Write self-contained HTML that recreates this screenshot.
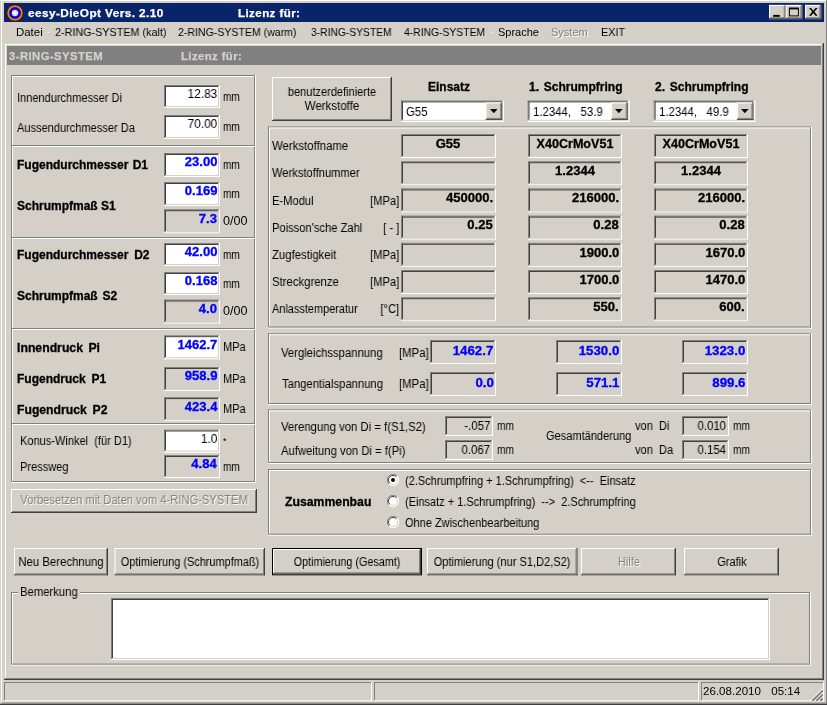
<!DOCTYPE html>
<html><head><meta charset="utf-8"><title>eesy-DieOpt Vers. 2.10</title>
<style>
html,body{margin:0;padding:0;background:#d4d0c8;}
#w{position:relative;width:827px;height:705px;overflow:hidden;background:#d4d0c8;font-family:"Liberation Sans",sans-serif;}
#w div,#w span,#w svg{position:absolute;}
#w .t{white-space:pre;will-change:transform;}
</style></head><body><div id="w">
<svg style="left:0;top:0" width="827" height="705" viewBox="0 0 827 705">
<rect x="0" y="0" width="827" height="705" fill="#d4d0c8"/>
<rect x="0" y="0" width="1" height="705" fill="#d4d0c8"/>
<rect x="1" y="0" width="1" height="705" fill="#ffffff"/>
<rect x="0" y="0" width="826" height="1" fill="#ffffff"/>
<rect x="826" y="0" width="1" height="705" fill="#808080"/>
<rect x="0" y="703.8" width="827" height="1.2" fill="#404040"/>
<rect x="1" y="702.6" width="826" height="1.2" fill="#808080"/>
<rect x="4" y="3" width="820" height="19" fill="#0a246a"/>
<rect x="769" y="4.9" width="16.7" height="14.3" fill="#d4d0c8"/>
<rect x="769" y="4.9" width="15.7" height="1" fill="#ffffff"/>
<rect x="769" y="4.9" width="1" height="13.3" fill="#ffffff"/>
<rect x="769" y="18.2" width="16.7" height="1" fill="#404040"/>
<rect x="784.7" y="4.9" width="1" height="14.3" fill="#404040"/>
<rect x="770" y="17.2" width="14.7" height="1" fill="#808080"/>
<rect x="783.7" y="5.9" width="1" height="12.3" fill="#808080"/>
<rect x="773.2" y="14.9" width="6.6" height="1.9" fill="#000"/>
<rect x="785.7" y="4.9" width="16.7" height="14.3" fill="#d4d0c8"/>
<rect x="785.7" y="4.9" width="15.7" height="1" fill="#ffffff"/>
<rect x="785.7" y="4.9" width="1" height="13.3" fill="#ffffff"/>
<rect x="785.7" y="18.2" width="16.7" height="1" fill="#404040"/>
<rect x="801.4" y="4.9" width="1" height="14.3" fill="#404040"/>
<rect x="786.7" y="17.2" width="14.7" height="1" fill="#808080"/>
<rect x="800.4" y="5.9" width="1" height="12.3" fill="#808080"/>
<rect x="788.9" y="7.5" width="10" height="8.9" fill="#000"/>
<rect x="789.9" y="9.4" width="8" height="6" fill="#d4d0c8"/>
<rect x="805.1" y="4.9" width="16.2" height="14.3" fill="#d4d0c8"/>
<rect x="805.1" y="4.9" width="15.2" height="1" fill="#ffffff"/>
<rect x="805.1" y="4.9" width="1" height="13.3" fill="#ffffff"/>
<rect x="805.1" y="18.2" width="16.2" height="1" fill="#404040"/>
<rect x="820.3" y="4.9" width="1" height="14.3" fill="#404040"/>
<rect x="806.1" y="17.2" width="14.2" height="1" fill="#808080"/>
<rect x="819.3" y="5.9" width="1" height="12.3" fill="#808080"/>
<rect x="47.5" y="32" width="2" height="1" fill="#f0eee8"/>
<rect x="491" y="32" width="2" height="1" fill="#f0eee8"/>
<rect x="5" y="44" width="818" height="1" fill="#ffffff"/>
<rect x="5" y="44" width="1" height="635" fill="#ffffff"/>
<rect x="822" y="44" width="1" height="635" fill="#808080"/>
<rect x="823" y="43" width="1" height="637" fill="#404040"/>
<rect x="5" y="678" width="818" height="1" fill="#808080"/>
<rect x="4" y="679" width="820" height="1" fill="#404040"/>
<rect x="7" y="46" width="814" height="19" fill="#808080"/>
<rect x="11" y="75" width="244" height="1" fill="#808080"/>
<rect x="12" y="76" width="242" height="1" fill="#ffffff"/>
<rect x="11" y="75" width="1" height="407" fill="#808080"/>
<rect x="12" y="76" width="1" height="405" fill="#ffffff"/>
<rect x="11" y="482" width="245" height="1" fill="#ffffff"/>
<rect x="12" y="481" width="243" height="1" fill="#808080"/>
<rect x="255" y="75" width="1" height="408" fill="#ffffff"/>
<rect x="254" y="76" width="1" height="406" fill="#808080"/>
<rect x="12" y="145" width="243" height="1" fill="#808080"/>
<rect x="12" y="146" width="243" height="1" fill="#ffffff"/>
<rect x="12" y="237" width="243" height="1" fill="#808080"/>
<rect x="12" y="238" width="243" height="1" fill="#ffffff"/>
<rect x="12" y="328" width="243" height="1" fill="#808080"/>
<rect x="12" y="329" width="243" height="1" fill="#ffffff"/>
<rect x="12" y="423" width="243" height="1" fill="#808080"/>
<rect x="12" y="424" width="243" height="1" fill="#ffffff"/>
<rect x="164" y="85" width="56" height="23" fill="#ffffff"/>
<rect x="164" y="85" width="55" height="1" fill="#808080"/>
<rect x="164" y="85" width="1" height="22" fill="#808080"/>
<rect x="165" y="86" width="53" height="1" fill="#404040"/>
<rect x="165" y="86" width="1" height="20" fill="#404040"/>
<rect x="164" y="107" width="56" height="1" fill="#ffffff"/>
<rect x="219" y="85" width="1" height="23" fill="#ffffff"/>
<rect x="165" y="106" width="54" height="1" fill="#d4d0c8"/>
<rect x="218" y="86" width="1" height="21" fill="#d4d0c8"/>
<rect x="164" y="115" width="56" height="24" fill="#ffffff"/>
<rect x="164" y="115" width="55" height="1" fill="#808080"/>
<rect x="164" y="115" width="1" height="23" fill="#808080"/>
<rect x="165" y="116" width="53" height="1" fill="#404040"/>
<rect x="165" y="116" width="1" height="21" fill="#404040"/>
<rect x="164" y="138" width="56" height="1" fill="#ffffff"/>
<rect x="219" y="115" width="1" height="24" fill="#ffffff"/>
<rect x="165" y="137" width="54" height="1" fill="#d4d0c8"/>
<rect x="218" y="116" width="1" height="22" fill="#d4d0c8"/>
<rect x="164" y="153" width="56" height="24" fill="#ffffff"/>
<rect x="164" y="153" width="55" height="1" fill="#808080"/>
<rect x="164" y="153" width="1" height="23" fill="#808080"/>
<rect x="165" y="154" width="53" height="1" fill="#404040"/>
<rect x="165" y="154" width="1" height="21" fill="#404040"/>
<rect x="164" y="176" width="56" height="1" fill="#ffffff"/>
<rect x="219" y="153" width="1" height="24" fill="#ffffff"/>
<rect x="165" y="175" width="54" height="1" fill="#d4d0c8"/>
<rect x="218" y="154" width="1" height="22" fill="#d4d0c8"/>
<rect x="164" y="182" width="56" height="24" fill="#ffffff"/>
<rect x="164" y="182" width="55" height="1" fill="#808080"/>
<rect x="164" y="182" width="1" height="23" fill="#808080"/>
<rect x="165" y="183" width="53" height="1" fill="#404040"/>
<rect x="165" y="183" width="1" height="21" fill="#404040"/>
<rect x="164" y="205" width="56" height="1" fill="#ffffff"/>
<rect x="219" y="182" width="1" height="24" fill="#ffffff"/>
<rect x="165" y="204" width="54" height="1" fill="#d4d0c8"/>
<rect x="218" y="183" width="1" height="22" fill="#d4d0c8"/>
<rect x="164" y="209.2" width="56" height="24" fill="#d4d0c8"/>
<rect x="164" y="209.2" width="55" height="1" fill="#808080"/>
<rect x="164" y="209.2" width="1" height="23" fill="#808080"/>
<rect x="165" y="210.2" width="53" height="1" fill="#404040"/>
<rect x="165" y="210.2" width="1" height="21" fill="#404040"/>
<rect x="164" y="232.2" width="56" height="1" fill="#ffffff"/>
<rect x="219" y="209.2" width="1" height="24" fill="#ffffff"/>
<rect x="165" y="231.2" width="54" height="1" fill="#d4d0c8"/>
<rect x="218" y="210.2" width="1" height="22" fill="#d4d0c8"/>
<rect x="164" y="243" width="56" height="23" fill="#ffffff"/>
<rect x="164" y="243" width="55" height="1" fill="#808080"/>
<rect x="164" y="243" width="1" height="22" fill="#808080"/>
<rect x="165" y="244" width="53" height="1" fill="#404040"/>
<rect x="165" y="244" width="1" height="20" fill="#404040"/>
<rect x="164" y="265" width="56" height="1" fill="#ffffff"/>
<rect x="219" y="243" width="1" height="23" fill="#ffffff"/>
<rect x="165" y="264" width="54" height="1" fill="#d4d0c8"/>
<rect x="218" y="244" width="1" height="21" fill="#d4d0c8"/>
<rect x="164" y="272" width="56" height="23" fill="#ffffff"/>
<rect x="164" y="272" width="55" height="1" fill="#808080"/>
<rect x="164" y="272" width="1" height="22" fill="#808080"/>
<rect x="165" y="273" width="53" height="1" fill="#404040"/>
<rect x="165" y="273" width="1" height="20" fill="#404040"/>
<rect x="164" y="294" width="56" height="1" fill="#ffffff"/>
<rect x="219" y="272" width="1" height="23" fill="#ffffff"/>
<rect x="165" y="293" width="54" height="1" fill="#d4d0c8"/>
<rect x="218" y="273" width="1" height="21" fill="#d4d0c8"/>
<rect x="164" y="299.5" width="56" height="24" fill="#d4d0c8"/>
<rect x="164" y="299.5" width="55" height="1" fill="#808080"/>
<rect x="164" y="299.5" width="1" height="23" fill="#808080"/>
<rect x="165" y="300.5" width="53" height="1" fill="#404040"/>
<rect x="165" y="300.5" width="1" height="21" fill="#404040"/>
<rect x="164" y="322.5" width="56" height="1" fill="#ffffff"/>
<rect x="219" y="299.5" width="1" height="24" fill="#ffffff"/>
<rect x="165" y="321.5" width="54" height="1" fill="#d4d0c8"/>
<rect x="218" y="300.5" width="1" height="22" fill="#d4d0c8"/>
<rect x="164" y="335.2" width="56" height="24" fill="#ffffff"/>
<rect x="164" y="335.2" width="55" height="1" fill="#808080"/>
<rect x="164" y="335.2" width="1" height="23" fill="#808080"/>
<rect x="165" y="336.2" width="53" height="1" fill="#404040"/>
<rect x="165" y="336.2" width="1" height="21" fill="#404040"/>
<rect x="164" y="358.2" width="56" height="1" fill="#ffffff"/>
<rect x="219" y="335.2" width="1" height="24" fill="#ffffff"/>
<rect x="165" y="357.2" width="54" height="1" fill="#d4d0c8"/>
<rect x="218" y="336.2" width="1" height="22" fill="#d4d0c8"/>
<rect x="164" y="367" width="56" height="24" fill="#d4d0c8"/>
<rect x="164" y="367" width="55" height="1" fill="#808080"/>
<rect x="164" y="367" width="1" height="23" fill="#808080"/>
<rect x="165" y="368" width="53" height="1" fill="#404040"/>
<rect x="165" y="368" width="1" height="21" fill="#404040"/>
<rect x="164" y="390" width="56" height="1" fill="#ffffff"/>
<rect x="219" y="367" width="1" height="24" fill="#ffffff"/>
<rect x="165" y="389" width="54" height="1" fill="#d4d0c8"/>
<rect x="218" y="368" width="1" height="22" fill="#d4d0c8"/>
<rect x="164" y="397.1" width="56" height="24" fill="#d4d0c8"/>
<rect x="164" y="397.1" width="55" height="1" fill="#808080"/>
<rect x="164" y="397.1" width="1" height="23" fill="#808080"/>
<rect x="165" y="398.1" width="53" height="1" fill="#404040"/>
<rect x="165" y="398.1" width="1" height="21" fill="#404040"/>
<rect x="164" y="420.1" width="56" height="1" fill="#ffffff"/>
<rect x="219" y="397.1" width="1" height="24" fill="#ffffff"/>
<rect x="165" y="419.1" width="54" height="1" fill="#d4d0c8"/>
<rect x="218" y="398.1" width="1" height="22" fill="#d4d0c8"/>
<rect x="164" y="429.5" width="56" height="23" fill="#ffffff"/>
<rect x="164" y="429.5" width="55" height="1" fill="#808080"/>
<rect x="164" y="429.5" width="1" height="22" fill="#808080"/>
<rect x="165" y="430.5" width="53" height="1" fill="#404040"/>
<rect x="165" y="430.5" width="1" height="20" fill="#404040"/>
<rect x="164" y="451.5" width="56" height="1" fill="#ffffff"/>
<rect x="219" y="429.5" width="1" height="23" fill="#ffffff"/>
<rect x="165" y="450.5" width="54" height="1" fill="#d4d0c8"/>
<rect x="218" y="430.5" width="1" height="21" fill="#d4d0c8"/>
<rect x="164" y="455" width="56" height="23" fill="#d4d0c8"/>
<rect x="164" y="455" width="55" height="1" fill="#808080"/>
<rect x="164" y="455" width="1" height="22" fill="#808080"/>
<rect x="165" y="456" width="53" height="1" fill="#404040"/>
<rect x="165" y="456" width="1" height="20" fill="#404040"/>
<rect x="164" y="477" width="56" height="1" fill="#ffffff"/>
<rect x="219" y="455" width="1" height="23" fill="#ffffff"/>
<rect x="165" y="476" width="54" height="1" fill="#d4d0c8"/>
<rect x="218" y="456" width="1" height="21" fill="#d4d0c8"/>
<rect x="11" y="489" width="246" height="24" fill="#d4d0c8"/>
<rect x="11" y="489" width="245" height="1" fill="#ffffff"/>
<rect x="11" y="489" width="1" height="23" fill="#ffffff"/>
<rect x="11" y="512" width="246" height="1" fill="#404040"/>
<rect x="256" y="489" width="1" height="24" fill="#404040"/>
<rect x="12" y="511" width="244" height="1" fill="#808080"/>
<rect x="255" y="490" width="1" height="22" fill="#808080"/>
<rect x="272" y="77" width="120" height="44" fill="#d4d0c8"/>
<rect x="272" y="77" width="119" height="1" fill="#ffffff"/>
<rect x="272" y="77" width="1" height="43" fill="#ffffff"/>
<rect x="272" y="120" width="120" height="1" fill="#404040"/>
<rect x="391" y="77" width="1" height="44" fill="#404040"/>
<rect x="273" y="119" width="118" height="1" fill="#808080"/>
<rect x="390" y="78" width="1" height="42" fill="#808080"/>
<rect x="401" y="100.4" width="103" height="21.4" fill="#ffffff"/>
<rect x="401" y="100.4" width="102" height="1" fill="#808080"/>
<rect x="401" y="100.4" width="1" height="20.4" fill="#808080"/>
<rect x="402" y="101.4" width="100" height="1" fill="#404040"/>
<rect x="402" y="101.4" width="1" height="18.4" fill="#404040"/>
<rect x="401" y="120.8" width="103" height="1" fill="#ffffff"/>
<rect x="503" y="100.4" width="1" height="21.4" fill="#ffffff"/>
<rect x="402" y="119.8" width="101" height="1" fill="#d4d0c8"/>
<rect x="502" y="101.4" width="1" height="19.4" fill="#d4d0c8"/>
<rect x="485.7" y="102.5" width="16.5" height="17.4" fill="#d4d0c8"/>
<rect x="485.7" y="102.5" width="15.5" height="1" fill="#ffffff"/>
<rect x="485.7" y="102.5" width="1" height="16.4" fill="#ffffff"/>
<rect x="485.7" y="118.9" width="16.5" height="1" fill="#404040"/>
<rect x="501.2" y="102.5" width="1" height="17.4" fill="#404040"/>
<rect x="486.7" y="117.9" width="14.5" height="1" fill="#808080"/>
<rect x="500.2" y="103.5" width="1" height="15.4" fill="#808080"/>
<rect x="527.5" y="100.4" width="102" height="21.4" fill="#ffffff"/>
<rect x="527.5" y="100.4" width="101" height="1" fill="#808080"/>
<rect x="527.5" y="100.4" width="1" height="20.4" fill="#808080"/>
<rect x="528.5" y="101.4" width="99" height="1" fill="#404040"/>
<rect x="528.5" y="101.4" width="1" height="18.4" fill="#404040"/>
<rect x="527.5" y="120.8" width="102" height="1" fill="#ffffff"/>
<rect x="628.5" y="100.4" width="1" height="21.4" fill="#ffffff"/>
<rect x="528.5" y="119.8" width="100" height="1" fill="#d4d0c8"/>
<rect x="627.5" y="101.4" width="1" height="19.4" fill="#d4d0c8"/>
<rect x="611.2" y="102.5" width="16.5" height="17.4" fill="#d4d0c8"/>
<rect x="611.2" y="102.5" width="15.5" height="1" fill="#ffffff"/>
<rect x="611.2" y="102.5" width="1" height="16.4" fill="#ffffff"/>
<rect x="611.2" y="118.9" width="16.5" height="1" fill="#404040"/>
<rect x="626.7" y="102.5" width="1" height="17.4" fill="#404040"/>
<rect x="612.2" y="117.9" width="14.5" height="1" fill="#808080"/>
<rect x="625.7" y="103.5" width="1" height="15.4" fill="#808080"/>
<rect x="653.6" y="100.4" width="101.6" height="21.4" fill="#ffffff"/>
<rect x="653.6" y="100.4" width="100.6" height="1" fill="#808080"/>
<rect x="653.6" y="100.4" width="1" height="20.4" fill="#808080"/>
<rect x="654.6" y="101.4" width="98.6" height="1" fill="#404040"/>
<rect x="654.6" y="101.4" width="1" height="18.4" fill="#404040"/>
<rect x="653.6" y="120.8" width="101.6" height="1" fill="#ffffff"/>
<rect x="754.2" y="100.4" width="1" height="21.4" fill="#ffffff"/>
<rect x="654.6" y="119.8" width="99.6" height="1" fill="#d4d0c8"/>
<rect x="753.2" y="101.4" width="1" height="19.4" fill="#d4d0c8"/>
<rect x="736.9" y="102.5" width="16.5" height="17.4" fill="#d4d0c8"/>
<rect x="736.9" y="102.5" width="15.5" height="1" fill="#ffffff"/>
<rect x="736.9" y="102.5" width="1" height="16.4" fill="#ffffff"/>
<rect x="736.9" y="118.9" width="16.5" height="1" fill="#404040"/>
<rect x="752.4" y="102.5" width="1" height="17.4" fill="#404040"/>
<rect x="737.9" y="117.9" width="14.5" height="1" fill="#808080"/>
<rect x="751.4" y="103.5" width="1" height="15.4" fill="#808080"/>
<rect x="268" y="126.5" width="543" height="1" fill="#808080"/>
<rect x="269" y="127.5" width="541" height="1" fill="#ffffff"/>
<rect x="268" y="126.5" width="1" height="201" fill="#808080"/>
<rect x="269" y="127.5" width="1" height="199" fill="#ffffff"/>
<rect x="268" y="327.5" width="544" height="1" fill="#ffffff"/>
<rect x="269" y="326.5" width="542" height="1" fill="#808080"/>
<rect x="811" y="126.5" width="1" height="202" fill="#ffffff"/>
<rect x="810" y="127.5" width="1" height="200" fill="#808080"/>
<rect x="401" y="134" width="95" height="24" fill="#d4d0c8"/>
<rect x="401" y="134" width="94" height="1" fill="#808080"/>
<rect x="401" y="134" width="1" height="23" fill="#808080"/>
<rect x="402" y="135" width="92" height="1" fill="#404040"/>
<rect x="402" y="135" width="1" height="21" fill="#404040"/>
<rect x="401" y="157" width="95" height="1" fill="#ffffff"/>
<rect x="495" y="134" width="1" height="24" fill="#ffffff"/>
<rect x="402" y="156" width="93" height="1" fill="#d4d0c8"/>
<rect x="494" y="135" width="1" height="22" fill="#d4d0c8"/>
<rect x="528" y="134" width="94" height="24" fill="#d4d0c8"/>
<rect x="528" y="134" width="93" height="1" fill="#808080"/>
<rect x="528" y="134" width="1" height="23" fill="#808080"/>
<rect x="529" y="135" width="91" height="1" fill="#404040"/>
<rect x="529" y="135" width="1" height="21" fill="#404040"/>
<rect x="528" y="157" width="94" height="1" fill="#ffffff"/>
<rect x="621" y="134" width="1" height="24" fill="#ffffff"/>
<rect x="529" y="156" width="92" height="1" fill="#d4d0c8"/>
<rect x="620" y="135" width="1" height="22" fill="#d4d0c8"/>
<rect x="654" y="134" width="94" height="24" fill="#d4d0c8"/>
<rect x="654" y="134" width="93" height="1" fill="#808080"/>
<rect x="654" y="134" width="1" height="23" fill="#808080"/>
<rect x="655" y="135" width="91" height="1" fill="#404040"/>
<rect x="655" y="135" width="1" height="21" fill="#404040"/>
<rect x="654" y="157" width="94" height="1" fill="#ffffff"/>
<rect x="747" y="134" width="1" height="24" fill="#ffffff"/>
<rect x="655" y="156" width="92" height="1" fill="#d4d0c8"/>
<rect x="746" y="135" width="1" height="22" fill="#d4d0c8"/>
<rect x="401" y="161.2" width="95" height="24" fill="#d4d0c8"/>
<rect x="401" y="161.2" width="94" height="1" fill="#808080"/>
<rect x="401" y="161.2" width="1" height="23" fill="#808080"/>
<rect x="402" y="162.2" width="92" height="1" fill="#404040"/>
<rect x="402" y="162.2" width="1" height="21" fill="#404040"/>
<rect x="401" y="184.2" width="95" height="1" fill="#ffffff"/>
<rect x="495" y="161.2" width="1" height="24" fill="#ffffff"/>
<rect x="402" y="183.2" width="93" height="1" fill="#d4d0c8"/>
<rect x="494" y="162.2" width="1" height="22" fill="#d4d0c8"/>
<rect x="528" y="161.2" width="94" height="24" fill="#d4d0c8"/>
<rect x="528" y="161.2" width="93" height="1" fill="#808080"/>
<rect x="528" y="161.2" width="1" height="23" fill="#808080"/>
<rect x="529" y="162.2" width="91" height="1" fill="#404040"/>
<rect x="529" y="162.2" width="1" height="21" fill="#404040"/>
<rect x="528" y="184.2" width="94" height="1" fill="#ffffff"/>
<rect x="621" y="161.2" width="1" height="24" fill="#ffffff"/>
<rect x="529" y="183.2" width="92" height="1" fill="#d4d0c8"/>
<rect x="620" y="162.2" width="1" height="22" fill="#d4d0c8"/>
<rect x="654" y="161.2" width="94" height="24" fill="#d4d0c8"/>
<rect x="654" y="161.2" width="93" height="1" fill="#808080"/>
<rect x="654" y="161.2" width="1" height="23" fill="#808080"/>
<rect x="655" y="162.2" width="91" height="1" fill="#404040"/>
<rect x="655" y="162.2" width="1" height="21" fill="#404040"/>
<rect x="654" y="184.2" width="94" height="1" fill="#ffffff"/>
<rect x="747" y="161.2" width="1" height="24" fill="#ffffff"/>
<rect x="655" y="183.2" width="92" height="1" fill="#d4d0c8"/>
<rect x="746" y="162.2" width="1" height="22" fill="#d4d0c8"/>
<rect x="401" y="188.4" width="95" height="24" fill="#d4d0c8"/>
<rect x="401" y="188.4" width="94" height="1" fill="#808080"/>
<rect x="401" y="188.4" width="1" height="23" fill="#808080"/>
<rect x="402" y="189.4" width="92" height="1" fill="#404040"/>
<rect x="402" y="189.4" width="1" height="21" fill="#404040"/>
<rect x="401" y="211.4" width="95" height="1" fill="#ffffff"/>
<rect x="495" y="188.4" width="1" height="24" fill="#ffffff"/>
<rect x="402" y="210.4" width="93" height="1" fill="#d4d0c8"/>
<rect x="494" y="189.4" width="1" height="22" fill="#d4d0c8"/>
<rect x="528" y="188.4" width="94" height="24" fill="#d4d0c8"/>
<rect x="528" y="188.4" width="93" height="1" fill="#808080"/>
<rect x="528" y="188.4" width="1" height="23" fill="#808080"/>
<rect x="529" y="189.4" width="91" height="1" fill="#404040"/>
<rect x="529" y="189.4" width="1" height="21" fill="#404040"/>
<rect x="528" y="211.4" width="94" height="1" fill="#ffffff"/>
<rect x="621" y="188.4" width="1" height="24" fill="#ffffff"/>
<rect x="529" y="210.4" width="92" height="1" fill="#d4d0c8"/>
<rect x="620" y="189.4" width="1" height="22" fill="#d4d0c8"/>
<rect x="654" y="188.4" width="94" height="24" fill="#d4d0c8"/>
<rect x="654" y="188.4" width="93" height="1" fill="#808080"/>
<rect x="654" y="188.4" width="1" height="23" fill="#808080"/>
<rect x="655" y="189.4" width="91" height="1" fill="#404040"/>
<rect x="655" y="189.4" width="1" height="21" fill="#404040"/>
<rect x="654" y="211.4" width="94" height="1" fill="#ffffff"/>
<rect x="747" y="188.4" width="1" height="24" fill="#ffffff"/>
<rect x="655" y="210.4" width="92" height="1" fill="#d4d0c8"/>
<rect x="746" y="189.4" width="1" height="22" fill="#d4d0c8"/>
<rect x="401" y="215.6" width="95" height="24" fill="#d4d0c8"/>
<rect x="401" y="215.6" width="94" height="1" fill="#808080"/>
<rect x="401" y="215.6" width="1" height="23" fill="#808080"/>
<rect x="402" y="216.6" width="92" height="1" fill="#404040"/>
<rect x="402" y="216.6" width="1" height="21" fill="#404040"/>
<rect x="401" y="238.6" width="95" height="1" fill="#ffffff"/>
<rect x="495" y="215.6" width="1" height="24" fill="#ffffff"/>
<rect x="402" y="237.6" width="93" height="1" fill="#d4d0c8"/>
<rect x="494" y="216.6" width="1" height="22" fill="#d4d0c8"/>
<rect x="528" y="215.6" width="94" height="24" fill="#d4d0c8"/>
<rect x="528" y="215.6" width="93" height="1" fill="#808080"/>
<rect x="528" y="215.6" width="1" height="23" fill="#808080"/>
<rect x="529" y="216.6" width="91" height="1" fill="#404040"/>
<rect x="529" y="216.6" width="1" height="21" fill="#404040"/>
<rect x="528" y="238.6" width="94" height="1" fill="#ffffff"/>
<rect x="621" y="215.6" width="1" height="24" fill="#ffffff"/>
<rect x="529" y="237.6" width="92" height="1" fill="#d4d0c8"/>
<rect x="620" y="216.6" width="1" height="22" fill="#d4d0c8"/>
<rect x="654" y="215.6" width="94" height="24" fill="#d4d0c8"/>
<rect x="654" y="215.6" width="93" height="1" fill="#808080"/>
<rect x="654" y="215.6" width="1" height="23" fill="#808080"/>
<rect x="655" y="216.6" width="91" height="1" fill="#404040"/>
<rect x="655" y="216.6" width="1" height="21" fill="#404040"/>
<rect x="654" y="238.6" width="94" height="1" fill="#ffffff"/>
<rect x="747" y="215.6" width="1" height="24" fill="#ffffff"/>
<rect x="655" y="237.6" width="92" height="1" fill="#d4d0c8"/>
<rect x="746" y="216.6" width="1" height="22" fill="#d4d0c8"/>
<rect x="401" y="242.8" width="95" height="24" fill="#d4d0c8"/>
<rect x="401" y="242.8" width="94" height="1" fill="#808080"/>
<rect x="401" y="242.8" width="1" height="23" fill="#808080"/>
<rect x="402" y="243.8" width="92" height="1" fill="#404040"/>
<rect x="402" y="243.8" width="1" height="21" fill="#404040"/>
<rect x="401" y="265.8" width="95" height="1" fill="#ffffff"/>
<rect x="495" y="242.8" width="1" height="24" fill="#ffffff"/>
<rect x="402" y="264.8" width="93" height="1" fill="#d4d0c8"/>
<rect x="494" y="243.8" width="1" height="22" fill="#d4d0c8"/>
<rect x="528" y="242.8" width="94" height="24" fill="#d4d0c8"/>
<rect x="528" y="242.8" width="93" height="1" fill="#808080"/>
<rect x="528" y="242.8" width="1" height="23" fill="#808080"/>
<rect x="529" y="243.8" width="91" height="1" fill="#404040"/>
<rect x="529" y="243.8" width="1" height="21" fill="#404040"/>
<rect x="528" y="265.8" width="94" height="1" fill="#ffffff"/>
<rect x="621" y="242.8" width="1" height="24" fill="#ffffff"/>
<rect x="529" y="264.8" width="92" height="1" fill="#d4d0c8"/>
<rect x="620" y="243.8" width="1" height="22" fill="#d4d0c8"/>
<rect x="654" y="242.8" width="94" height="24" fill="#d4d0c8"/>
<rect x="654" y="242.8" width="93" height="1" fill="#808080"/>
<rect x="654" y="242.8" width="1" height="23" fill="#808080"/>
<rect x="655" y="243.8" width="91" height="1" fill="#404040"/>
<rect x="655" y="243.8" width="1" height="21" fill="#404040"/>
<rect x="654" y="265.8" width="94" height="1" fill="#ffffff"/>
<rect x="747" y="242.8" width="1" height="24" fill="#ffffff"/>
<rect x="655" y="264.8" width="92" height="1" fill="#d4d0c8"/>
<rect x="746" y="243.8" width="1" height="22" fill="#d4d0c8"/>
<rect x="401" y="270" width="95" height="24" fill="#d4d0c8"/>
<rect x="401" y="270" width="94" height="1" fill="#808080"/>
<rect x="401" y="270" width="1" height="23" fill="#808080"/>
<rect x="402" y="271" width="92" height="1" fill="#404040"/>
<rect x="402" y="271" width="1" height="21" fill="#404040"/>
<rect x="401" y="293" width="95" height="1" fill="#ffffff"/>
<rect x="495" y="270" width="1" height="24" fill="#ffffff"/>
<rect x="402" y="292" width="93" height="1" fill="#d4d0c8"/>
<rect x="494" y="271" width="1" height="22" fill="#d4d0c8"/>
<rect x="528" y="270" width="94" height="24" fill="#d4d0c8"/>
<rect x="528" y="270" width="93" height="1" fill="#808080"/>
<rect x="528" y="270" width="1" height="23" fill="#808080"/>
<rect x="529" y="271" width="91" height="1" fill="#404040"/>
<rect x="529" y="271" width="1" height="21" fill="#404040"/>
<rect x="528" y="293" width="94" height="1" fill="#ffffff"/>
<rect x="621" y="270" width="1" height="24" fill="#ffffff"/>
<rect x="529" y="292" width="92" height="1" fill="#d4d0c8"/>
<rect x="620" y="271" width="1" height="22" fill="#d4d0c8"/>
<rect x="654" y="270" width="94" height="24" fill="#d4d0c8"/>
<rect x="654" y="270" width="93" height="1" fill="#808080"/>
<rect x="654" y="270" width="1" height="23" fill="#808080"/>
<rect x="655" y="271" width="91" height="1" fill="#404040"/>
<rect x="655" y="271" width="1" height="21" fill="#404040"/>
<rect x="654" y="293" width="94" height="1" fill="#ffffff"/>
<rect x="747" y="270" width="1" height="24" fill="#ffffff"/>
<rect x="655" y="292" width="92" height="1" fill="#d4d0c8"/>
<rect x="746" y="271" width="1" height="22" fill="#d4d0c8"/>
<rect x="401" y="297.2" width="95" height="24" fill="#d4d0c8"/>
<rect x="401" y="297.2" width="94" height="1" fill="#808080"/>
<rect x="401" y="297.2" width="1" height="23" fill="#808080"/>
<rect x="402" y="298.2" width="92" height="1" fill="#404040"/>
<rect x="402" y="298.2" width="1" height="21" fill="#404040"/>
<rect x="401" y="320.2" width="95" height="1" fill="#ffffff"/>
<rect x="495" y="297.2" width="1" height="24" fill="#ffffff"/>
<rect x="402" y="319.2" width="93" height="1" fill="#d4d0c8"/>
<rect x="494" y="298.2" width="1" height="22" fill="#d4d0c8"/>
<rect x="528" y="297.2" width="94" height="24" fill="#d4d0c8"/>
<rect x="528" y="297.2" width="93" height="1" fill="#808080"/>
<rect x="528" y="297.2" width="1" height="23" fill="#808080"/>
<rect x="529" y="298.2" width="91" height="1" fill="#404040"/>
<rect x="529" y="298.2" width="1" height="21" fill="#404040"/>
<rect x="528" y="320.2" width="94" height="1" fill="#ffffff"/>
<rect x="621" y="297.2" width="1" height="24" fill="#ffffff"/>
<rect x="529" y="319.2" width="92" height="1" fill="#d4d0c8"/>
<rect x="620" y="298.2" width="1" height="22" fill="#d4d0c8"/>
<rect x="654" y="297.2" width="94" height="24" fill="#d4d0c8"/>
<rect x="654" y="297.2" width="93" height="1" fill="#808080"/>
<rect x="654" y="297.2" width="1" height="23" fill="#808080"/>
<rect x="655" y="298.2" width="91" height="1" fill="#404040"/>
<rect x="655" y="298.2" width="1" height="21" fill="#404040"/>
<rect x="654" y="320.2" width="94" height="1" fill="#ffffff"/>
<rect x="747" y="297.2" width="1" height="24" fill="#ffffff"/>
<rect x="655" y="319.2" width="92" height="1" fill="#d4d0c8"/>
<rect x="746" y="298.2" width="1" height="22" fill="#d4d0c8"/>
<rect x="268" y="333.3" width="543" height="1" fill="#808080"/>
<rect x="269" y="334.3" width="541" height="1" fill="#ffffff"/>
<rect x="268" y="333.3" width="1" height="70.7" fill="#808080"/>
<rect x="269" y="334.3" width="1" height="68.7" fill="#ffffff"/>
<rect x="268" y="404" width="544" height="1" fill="#ffffff"/>
<rect x="269" y="403" width="542" height="1" fill="#808080"/>
<rect x="811" y="333.3" width="1" height="71.7" fill="#ffffff"/>
<rect x="810" y="334.3" width="1" height="69.7" fill="#808080"/>
<rect x="430" y="340" width="66" height="24" fill="#d4d0c8"/>
<rect x="430" y="340" width="65" height="1" fill="#808080"/>
<rect x="430" y="340" width="1" height="23" fill="#808080"/>
<rect x="431" y="341" width="63" height="1" fill="#404040"/>
<rect x="431" y="341" width="1" height="21" fill="#404040"/>
<rect x="430" y="363" width="66" height="1" fill="#ffffff"/>
<rect x="495" y="340" width="1" height="24" fill="#ffffff"/>
<rect x="431" y="362" width="64" height="1" fill="#d4d0c8"/>
<rect x="494" y="341" width="1" height="22" fill="#d4d0c8"/>
<rect x="556" y="340" width="66" height="24" fill="#d4d0c8"/>
<rect x="556" y="340" width="65" height="1" fill="#808080"/>
<rect x="556" y="340" width="1" height="23" fill="#808080"/>
<rect x="557" y="341" width="63" height="1" fill="#404040"/>
<rect x="557" y="341" width="1" height="21" fill="#404040"/>
<rect x="556" y="363" width="66" height="1" fill="#ffffff"/>
<rect x="621" y="340" width="1" height="24" fill="#ffffff"/>
<rect x="557" y="362" width="64" height="1" fill="#d4d0c8"/>
<rect x="620" y="341" width="1" height="22" fill="#d4d0c8"/>
<rect x="682" y="340" width="66" height="24" fill="#d4d0c8"/>
<rect x="682" y="340" width="65" height="1" fill="#808080"/>
<rect x="682" y="340" width="1" height="23" fill="#808080"/>
<rect x="683" y="341" width="63" height="1" fill="#404040"/>
<rect x="683" y="341" width="1" height="21" fill="#404040"/>
<rect x="682" y="363" width="66" height="1" fill="#ffffff"/>
<rect x="747" y="340" width="1" height="24" fill="#ffffff"/>
<rect x="683" y="362" width="64" height="1" fill="#d4d0c8"/>
<rect x="746" y="341" width="1" height="22" fill="#d4d0c8"/>
<rect x="430" y="372" width="66" height="24" fill="#d4d0c8"/>
<rect x="430" y="372" width="65" height="1" fill="#808080"/>
<rect x="430" y="372" width="1" height="23" fill="#808080"/>
<rect x="431" y="373" width="63" height="1" fill="#404040"/>
<rect x="431" y="373" width="1" height="21" fill="#404040"/>
<rect x="430" y="395" width="66" height="1" fill="#ffffff"/>
<rect x="495" y="372" width="1" height="24" fill="#ffffff"/>
<rect x="431" y="394" width="64" height="1" fill="#d4d0c8"/>
<rect x="494" y="373" width="1" height="22" fill="#d4d0c8"/>
<rect x="556" y="372" width="66" height="24" fill="#d4d0c8"/>
<rect x="556" y="372" width="65" height="1" fill="#808080"/>
<rect x="556" y="372" width="1" height="23" fill="#808080"/>
<rect x="557" y="373" width="63" height="1" fill="#404040"/>
<rect x="557" y="373" width="1" height="21" fill="#404040"/>
<rect x="556" y="395" width="66" height="1" fill="#ffffff"/>
<rect x="621" y="372" width="1" height="24" fill="#ffffff"/>
<rect x="557" y="394" width="64" height="1" fill="#d4d0c8"/>
<rect x="620" y="373" width="1" height="22" fill="#d4d0c8"/>
<rect x="682" y="372" width="66" height="24" fill="#d4d0c8"/>
<rect x="682" y="372" width="65" height="1" fill="#808080"/>
<rect x="682" y="372" width="1" height="23" fill="#808080"/>
<rect x="683" y="373" width="63" height="1" fill="#404040"/>
<rect x="683" y="373" width="1" height="21" fill="#404040"/>
<rect x="682" y="395" width="66" height="1" fill="#ffffff"/>
<rect x="747" y="372" width="1" height="24" fill="#ffffff"/>
<rect x="683" y="394" width="64" height="1" fill="#d4d0c8"/>
<rect x="746" y="373" width="1" height="22" fill="#d4d0c8"/>
<rect x="268" y="409.4" width="543" height="1" fill="#808080"/>
<rect x="269" y="410.4" width="541" height="1" fill="#ffffff"/>
<rect x="268" y="409.4" width="1" height="53.6" fill="#808080"/>
<rect x="269" y="410.4" width="1" height="51.6" fill="#ffffff"/>
<rect x="268" y="463" width="544" height="1" fill="#ffffff"/>
<rect x="269" y="462" width="542" height="1" fill="#808080"/>
<rect x="811" y="409.4" width="1" height="54.6" fill="#ffffff"/>
<rect x="810" y="410.4" width="1" height="52.6" fill="#808080"/>
<rect x="445" y="416" width="48" height="20" fill="#d4d0c8"/>
<rect x="445" y="416" width="47" height="1" fill="#808080"/>
<rect x="445" y="416" width="1" height="19" fill="#808080"/>
<rect x="446" y="417" width="45" height="1" fill="#404040"/>
<rect x="446" y="417" width="1" height="17" fill="#404040"/>
<rect x="445" y="435" width="48" height="1" fill="#ffffff"/>
<rect x="492" y="416" width="1" height="20" fill="#ffffff"/>
<rect x="446" y="434" width="46" height="1" fill="#d4d0c8"/>
<rect x="491" y="417" width="1" height="18" fill="#d4d0c8"/>
<rect x="682" y="416" width="47" height="20" fill="#d4d0c8"/>
<rect x="682" y="416" width="46" height="1" fill="#808080"/>
<rect x="682" y="416" width="1" height="19" fill="#808080"/>
<rect x="683" y="417" width="44" height="1" fill="#404040"/>
<rect x="683" y="417" width="1" height="17" fill="#404040"/>
<rect x="682" y="435" width="47" height="1" fill="#ffffff"/>
<rect x="728" y="416" width="1" height="20" fill="#ffffff"/>
<rect x="683" y="434" width="45" height="1" fill="#d4d0c8"/>
<rect x="727" y="417" width="1" height="18" fill="#d4d0c8"/>
<rect x="445" y="440" width="48" height="20" fill="#d4d0c8"/>
<rect x="445" y="440" width="47" height="1" fill="#808080"/>
<rect x="445" y="440" width="1" height="19" fill="#808080"/>
<rect x="446" y="441" width="45" height="1" fill="#404040"/>
<rect x="446" y="441" width="1" height="17" fill="#404040"/>
<rect x="445" y="459" width="48" height="1" fill="#ffffff"/>
<rect x="492" y="440" width="1" height="20" fill="#ffffff"/>
<rect x="446" y="458" width="46" height="1" fill="#d4d0c8"/>
<rect x="491" y="441" width="1" height="18" fill="#d4d0c8"/>
<rect x="682" y="440" width="47" height="20" fill="#d4d0c8"/>
<rect x="682" y="440" width="46" height="1" fill="#808080"/>
<rect x="682" y="440" width="1" height="19" fill="#808080"/>
<rect x="683" y="441" width="44" height="1" fill="#404040"/>
<rect x="683" y="441" width="1" height="17" fill="#404040"/>
<rect x="682" y="459" width="47" height="1" fill="#ffffff"/>
<rect x="728" y="440" width="1" height="20" fill="#ffffff"/>
<rect x="683" y="458" width="45" height="1" fill="#d4d0c8"/>
<rect x="727" y="441" width="1" height="18" fill="#d4d0c8"/>
<rect x="268" y="469" width="543" height="1" fill="#808080"/>
<rect x="269" y="470" width="541" height="1" fill="#ffffff"/>
<rect x="268" y="469" width="1" height="65.7" fill="#808080"/>
<rect x="269" y="470" width="1" height="63.7" fill="#ffffff"/>
<rect x="268" y="534.7" width="544" height="1" fill="#ffffff"/>
<rect x="269" y="533.7" width="542" height="1" fill="#808080"/>
<rect x="811" y="469" width="1" height="66.7" fill="#ffffff"/>
<rect x="810" y="470" width="1" height="64.7" fill="#808080"/>
<rect x="14" y="548" width="94" height="27.3" fill="#d4d0c8"/>
<rect x="14" y="548" width="93" height="1" fill="#ffffff"/>
<rect x="14" y="548" width="1" height="26.3" fill="#ffffff"/>
<rect x="14" y="574.3" width="94" height="1" fill="#404040"/>
<rect x="107" y="548" width="1" height="27.3" fill="#404040"/>
<rect x="15" y="573.3" width="92" height="1" fill="#808080"/>
<rect x="106" y="549" width="1" height="25.3" fill="#808080"/>
<rect x="114.5" y="548" width="150.5" height="27.3" fill="#d4d0c8"/>
<rect x="114.5" y="548" width="149.5" height="1" fill="#ffffff"/>
<rect x="114.5" y="548" width="1" height="26.3" fill="#ffffff"/>
<rect x="114.5" y="574.3" width="150.5" height="1" fill="#404040"/>
<rect x="264" y="548" width="1" height="27.3" fill="#404040"/>
<rect x="115.5" y="573.3" width="148.5" height="1" fill="#808080"/>
<rect x="263" y="549" width="1" height="25.3" fill="#808080"/>
<rect x="272" y="548" width="150" height="27.3" fill="#000"/>
<rect x="273" y="549" width="148" height="25.3" fill="#d4d0c8"/>
<rect x="273" y="549" width="147" height="1" fill="#ffffff"/>
<rect x="273" y="549" width="1" height="24.3" fill="#ffffff"/>
<rect x="273" y="573.3" width="148" height="1" fill="#404040"/>
<rect x="420" y="549" width="1" height="25.3" fill="#404040"/>
<rect x="274" y="572.3" width="146" height="1" fill="#808080"/>
<rect x="419" y="550" width="1" height="23.3" fill="#808080"/>
<rect x="427" y="548" width="150.5" height="27.3" fill="#d4d0c8"/>
<rect x="427" y="548" width="149.5" height="1" fill="#ffffff"/>
<rect x="427" y="548" width="1" height="26.3" fill="#ffffff"/>
<rect x="427" y="574.3" width="150.5" height="1" fill="#404040"/>
<rect x="576.5" y="548" width="1" height="27.3" fill="#404040"/>
<rect x="428" y="573.3" width="148.5" height="1" fill="#808080"/>
<rect x="575.5" y="549" width="1" height="25.3" fill="#808080"/>
<rect x="581" y="548" width="95" height="27.3" fill="#d4d0c8"/>
<rect x="581" y="548" width="94" height="1" fill="#ffffff"/>
<rect x="581" y="548" width="1" height="26.3" fill="#ffffff"/>
<rect x="581" y="574.3" width="95" height="1" fill="#404040"/>
<rect x="675" y="548" width="1" height="27.3" fill="#404040"/>
<rect x="582" y="573.3" width="93" height="1" fill="#808080"/>
<rect x="674" y="549" width="1" height="25.3" fill="#808080"/>
<rect x="684" y="548" width="95" height="27.3" fill="#d4d0c8"/>
<rect x="684" y="548" width="94" height="1" fill="#ffffff"/>
<rect x="684" y="548" width="1" height="26.3" fill="#ffffff"/>
<rect x="684" y="574.3" width="95" height="1" fill="#404040"/>
<rect x="778" y="548" width="1" height="27.3" fill="#404040"/>
<rect x="685" y="573.3" width="93" height="1" fill="#808080"/>
<rect x="777" y="549" width="1" height="25.3" fill="#808080"/>
<rect x="11" y="592" width="799" height="1" fill="#808080"/>
<rect x="12" y="593" width="797" height="1" fill="#ffffff"/>
<rect x="11" y="592" width="1" height="72.6" fill="#808080"/>
<rect x="12" y="593" width="1" height="70.6" fill="#ffffff"/>
<rect x="11" y="664.6" width="800" height="1" fill="#ffffff"/>
<rect x="12" y="663.6" width="798" height="1" fill="#808080"/>
<rect x="810" y="592" width="1" height="73.6" fill="#ffffff"/>
<rect x="809" y="593" width="1" height="71.6" fill="#808080"/>
<rect x="18" y="588" width="62" height="10" fill="#d4d0c8"/>
<rect x="111" y="598" width="659" height="62" fill="#ffffff"/>
<rect x="111" y="598" width="658" height="1" fill="#808080"/>
<rect x="111" y="598" width="1" height="61" fill="#808080"/>
<rect x="112" y="599" width="656" height="1" fill="#404040"/>
<rect x="112" y="599" width="1" height="59" fill="#404040"/>
<rect x="111" y="659" width="659" height="1" fill="#ffffff"/>
<rect x="769" y="598" width="1" height="62" fill="#ffffff"/>
<rect x="112" y="658" width="657" height="1" fill="#d4d0c8"/>
<rect x="768" y="599" width="1" height="60" fill="#d4d0c8"/>
<rect x="4" y="682" width="367" height="1" fill="#808080"/>
<rect x="4" y="682" width="1" height="18.3" fill="#808080"/>
<rect x="4" y="700.3" width="368" height="1" fill="#ffffff"/>
<rect x="371" y="682" width="1" height="19.3" fill="#ffffff"/>
<rect x="374" y="682" width="324" height="1" fill="#808080"/>
<rect x="374" y="682" width="1" height="18.3" fill="#808080"/>
<rect x="374" y="700.3" width="325" height="1" fill="#ffffff"/>
<rect x="698" y="682" width="1" height="19.3" fill="#ffffff"/>
<rect x="701" y="682" width="122" height="1" fill="#808080"/>
<rect x="701" y="682" width="1" height="18.3" fill="#808080"/>
<rect x="701" y="700.3" width="123" height="1" fill="#ffffff"/>
<rect x="823" y="682" width="1" height="19.3" fill="#ffffff"/>
</svg>
<svg style="left:5.65px;top:3.5px" width="18" height="18" viewBox="0 0 18 18">
<circle cx="9" cy="9" r="8.1" fill="#ff8000" stroke="#101020" stroke-width="0.7"/>
<circle cx="9" cy="9" r="5.7" fill="#0000ff" stroke="#201060" stroke-width="0.5"/>
<circle cx="9" cy="9" r="3.3" fill="#c8c8d0"/>
<path d="M9 6.3v5.4M6.3 9h5.4" stroke="#ffffff" stroke-width="1.3"/>
</svg>
<span class="t" style="top:7.69px;font-size:11px;line-height:11px;font-weight:bold;color:#ffffff;letter-spacing:0.4px;left:27.5px;transform-origin:0 0;transform:scaleX(1.07);-webkit-text-stroke:0.25px #fff;">eesy-DieOpt Vers. 2.10</span>
<span class="t" style="top:7.69px;font-size:11px;line-height:11px;font-weight:bold;color:#ffffff;letter-spacing:0.4px;left:238px;transform-origin:0 0;transform:scaleX(1.05);-webkit-text-stroke:0.25px #fff;">Lizenz für:</span>
<svg style="left:809.0px;top:8.1px" width="8.6" height="7.7" viewBox="0 0 8 7" preserveAspectRatio="none"><path d="M0 0h2l2 2.5 2-2.5h2l-3 3.5 3 3.5h-2l-2-2.5-2 2.5h-2l3-3.5z" fill="#000"/></svg>
<span class="t" style="top:26.69px;font-size:11px;line-height:11px;font-weight:normal;color:#000;left:16px;transform-origin:0 0;transform:scaleX(1.04);">Datei</span>
<span class="t" style="top:26.69px;font-size:11px;line-height:11px;font-weight:normal;color:#000;left:55px;transform-origin:0 0;transform:scaleX(0.98);">2-RING-SYSTEM (kalt)</span>
<span class="t" style="top:26.69px;font-size:11px;line-height:11px;font-weight:normal;color:#000;left:178px;transform-origin:0 0;transform:scaleX(0.96);">2-RING-SYSTEM (warm)</span>
<span class="t" style="top:26.69px;font-size:11px;line-height:11px;font-weight:normal;color:#000;left:310.5px;transform-origin:0 0;transform:scaleX(0.935);">3-RING-SYSTEM</span>
<span class="t" style="top:26.69px;font-size:11px;line-height:11px;font-weight:normal;color:#000;left:404px;transform-origin:0 0;transform:scaleX(0.94);">4-RING-SYSTEM</span>
<span class="t" style="top:26.69px;font-size:11px;line-height:11px;font-weight:normal;color:#000;left:497.5px;transform-origin:0 0;">Sprache</span>
<span class="t" style="top:26.69px;font-size:11px;line-height:11px;font-weight:normal;color:#000;left:600.5px;transform-origin:0 0;transform:scaleX(0.98);">EXIT</span>
<span class="t" style="top:26.69px;font-size:11px;line-height:11px;font-weight:normal;color:#808080;left:551px;transform-origin:0 0;text-shadow:1px 1px 0 #fff;">System</span>
<span class="t" style="top:50.69px;font-size:11px;line-height:11px;font-weight:bold;color:#d4d0c8;letter-spacing:0.4px;left:9px;transform-origin:0 0;transform:scaleX(1.03);-webkit-text-stroke:0.25px #d4d0c8;">3-RING-SYSTEM</span>
<span class="t" style="top:50.69px;font-size:11px;line-height:11px;font-weight:bold;color:#d4d0c8;letter-spacing:0.4px;left:181px;transform-origin:0 0;transform:scaleX(1.03);-webkit-text-stroke:0.25px #d4d0c8;">Lizenz für:</span>
<span class="t" style="top:88.32px;font-size:12.5px;line-height:12.5px;font-weight:normal;color:#000;right:610px;transform-origin:100% 0;transform:scaleX(0.95);">12.83</span>
<span class="t" style="top:90.74px;font-size:12px;line-height:12px;font-weight:normal;color:#000;left:222.5px;transform-origin:0 0;transform:scaleX(0.83);">mm</span>
<span class="t" style="top:118.22px;font-size:12.5px;line-height:12.5px;font-weight:normal;color:#000;right:610px;transform-origin:100% 0;transform:scaleX(0.95);">70.00</span>
<span class="t" style="top:120.64px;font-size:12px;line-height:12px;font-weight:normal;color:#000;left:222.5px;transform-origin:0 0;transform:scaleX(0.83);">mm</span>
<span class="t" style="top:91.64px;font-size:12px;line-height:12px;font-weight:normal;color:#000;left:17px;transform-origin:0 0;transform:scaleX(0.92);">Innendurchmesser Di</span>
<span class="t" style="top:122.14px;font-size:12px;line-height:12px;font-weight:normal;color:#000;left:17px;transform-origin:0 0;transform:scaleX(0.92);">Aussendurchmesser Da</span>
<span class="t" style="top:156.47px;font-size:12.2px;line-height:12.2px;font-weight:bold;color:#0000ff;-webkit-text-stroke:0.3px #0000ff;right:610px;transform-origin:100% 0;transform:scaleX(1.07);">23.00</span>
<span class="t" style="top:158.64px;font-size:12px;line-height:12px;font-weight:normal;color:#000;left:222.5px;transform-origin:0 0;transform:scaleX(0.83);">mm</span>
<span class="t" style="top:185.47px;font-size:12.2px;line-height:12.2px;font-weight:bold;color:#0000ff;-webkit-text-stroke:0.3px #0000ff;right:610px;transform-origin:100% 0;transform:scaleX(1.07);">0.169</span>
<span class="t" style="top:187.64px;font-size:12px;line-height:12px;font-weight:normal;color:#000;left:222.5px;transform-origin:0 0;transform:scaleX(0.83);">mm</span>
<span class="t" style="top:212.67px;font-size:12.2px;line-height:12.2px;font-weight:bold;color:#0000ff;-webkit-text-stroke:0.3px #0000ff;right:610px;transform-origin:100% 0;transform:scaleX(1.07);">7.3</span>
<span class="t" style="top:214.84px;font-size:12px;line-height:12px;font-weight:normal;color:#000;left:222.5px;transform-origin:0 0;transform:scaleX(1.05);">0/00</span>
<span class="t" style="top:159.44px;font-size:12px;line-height:12px;font-weight:bold;color:#000;-webkit-text-stroke:0.3px #000;left:17px;transform-origin:0 0;word-spacing:1px;">Fugendurchmesser D1</span>
<span class="t" style="top:200.24px;font-size:12px;line-height:12px;font-weight:bold;color:#000;-webkit-text-stroke:0.3px #000;left:17px;transform-origin:0 0;word-spacing:0px;">Schrumpfmaß S1</span>
<span class="t" style="top:246.47px;font-size:12.2px;line-height:12.2px;font-weight:bold;color:#0000ff;-webkit-text-stroke:0.3px #0000ff;right:610px;transform-origin:100% 0;transform:scaleX(1.07);">42.00</span>
<span class="t" style="top:248.64px;font-size:12px;line-height:12px;font-weight:normal;color:#000;left:222.5px;transform-origin:0 0;transform:scaleX(0.83);">mm</span>
<span class="t" style="top:275.47px;font-size:12.2px;line-height:12.2px;font-weight:bold;color:#0000ff;-webkit-text-stroke:0.3px #0000ff;right:610px;transform-origin:100% 0;transform:scaleX(1.07);">0.168</span>
<span class="t" style="top:277.64px;font-size:12px;line-height:12px;font-weight:normal;color:#000;left:222.5px;transform-origin:0 0;transform:scaleX(0.83);">mm</span>
<span class="t" style="top:302.97px;font-size:12.2px;line-height:12.2px;font-weight:bold;color:#0000ff;-webkit-text-stroke:0.3px #0000ff;right:610px;transform-origin:100% 0;transform:scaleX(1.07);">4.0</span>
<span class="t" style="top:305.14px;font-size:12px;line-height:12px;font-weight:normal;color:#000;left:222.5px;transform-origin:0 0;transform:scaleX(1.05);">0/00</span>
<span class="t" style="top:248.54px;font-size:12px;line-height:12px;font-weight:bold;color:#000;-webkit-text-stroke:0.3px #000;left:17px;transform-origin:0 0;word-spacing:2.5px;">Fugendurchmesser D2</span>
<span class="t" style="top:289.54px;font-size:12px;line-height:12px;font-weight:bold;color:#000;-webkit-text-stroke:0.3px #000;left:17px;transform-origin:0 0;word-spacing:1.5px;">Schrumpfmaß S2</span>
<span class="t" style="top:338.67px;font-size:12.2px;line-height:12.2px;font-weight:bold;color:#0000ff;-webkit-text-stroke:0.3px #0000ff;right:610px;transform-origin:100% 0;transform:scaleX(1.07);">1462.7</span>
<span class="t" style="top:340.84px;font-size:12px;line-height:12px;font-weight:normal;color:#000;left:222.5px;transform-origin:0 0;transform:scaleX(0.92);">MPa</span>
<span class="t" style="top:370.47px;font-size:12.2px;line-height:12.2px;font-weight:bold;color:#0000ff;-webkit-text-stroke:0.3px #0000ff;right:610px;transform-origin:100% 0;transform:scaleX(1.07);">958.9</span>
<span class="t" style="top:372.64px;font-size:12px;line-height:12px;font-weight:normal;color:#000;left:222.5px;transform-origin:0 0;transform:scaleX(0.92);">MPa</span>
<span class="t" style="top:400.57px;font-size:12.2px;line-height:12.2px;font-weight:bold;color:#0000ff;-webkit-text-stroke:0.3px #0000ff;right:610px;transform-origin:100% 0;transform:scaleX(1.07);">423.4</span>
<span class="t" style="top:402.74px;font-size:12px;line-height:12px;font-weight:normal;color:#000;left:222.5px;transform-origin:0 0;transform:scaleX(0.92);">MPa</span>
<span class="t" style="top:341.84px;font-size:12px;line-height:12px;font-weight:bold;color:#000;-webkit-text-stroke:0.3px #000;left:17px;transform-origin:0 0;transform:scaleX(1.02);word-spacing:2px;">Innendruck Pi</span>
<span class="t" style="top:372.84px;font-size:12px;line-height:12px;font-weight:bold;color:#000;-webkit-text-stroke:0.3px #000;left:17px;transform-origin:0 0;word-spacing:2.4px;">Fugendruck P1</span>
<span class="t" style="top:403.54px;font-size:12px;line-height:12px;font-weight:bold;color:#000;-webkit-text-stroke:0.3px #000;left:17px;transform-origin:0 0;transform:scaleX(1.015);word-spacing:2.5px;">Fugendruck P2</span>
<span class="t" style="top:432.72px;font-size:12.5px;line-height:12.5px;font-weight:normal;color:#000;right:610px;transform-origin:100% 0;transform:scaleX(0.95);">1.0</span>
<span class="t" style="top:435.14px;font-size:12px;line-height:12px;font-weight:normal;color:#000;left:222.5px;transform-origin:0 0;transform:scaleX(0.83);"></span>
<span class="t" style="top:458.47px;font-size:12.2px;line-height:12.2px;font-weight:bold;color:#0000ff;-webkit-text-stroke:0.3px #0000ff;right:610px;transform-origin:100% 0;transform:scaleX(1.07);">4.84</span>
<span class="t" style="top:460.64px;font-size:12px;line-height:12px;font-weight:normal;color:#000;left:222.5px;transform-origin:0 0;transform:scaleX(0.83);">mm</span>
<span class="t" style="top:437.38px;font-size:9px;line-height:9px;font-weight:normal;color:#000;left:223px;transform-origin:0 0;">*</span>
<span class="t" style="top:434.84px;font-size:12px;line-height:12px;font-weight:normal;color:#000;left:20px;transform-origin:0 0;transform:scaleX(0.92);">Konus-Winkel  (für D1)</span>
<span class="t" style="top:460.84px;font-size:12px;line-height:12px;font-weight:normal;color:#000;left:20px;transform-origin:0 0;transform:scaleX(0.92);">Pressweg</span>
<span class="t" style="top:494.44px;font-size:12px;line-height:12px;font-weight:normal;color:#808080;left:-66px;width:400px;text-align:center;transform-origin:50% 0;transform:scaleX(0.93);text-shadow:1px 1px 0 #fff;">Vorbesetzen mit Daten vom 4-RING-SYSTEM</span>
<span class="t" style="top:85.84px;font-size:12px;line-height:12px;font-weight:normal;color:#000;left:132px;width:400px;text-align:center;transform-origin:50% 0;transform:scaleX(0.92);">benutzerdefinierte</span>
<span class="t" style="top:99.84px;font-size:12px;line-height:12px;font-weight:normal;color:#000;left:131.5px;width:400px;text-align:center;transform-origin:50% 0;transform:scaleX(0.96);">Werkstoffe</span>
<span class="t" style="top:80.84px;font-size:12px;line-height:12px;font-weight:bold;color:#000;-webkit-text-stroke:0.3px #000;left:248.5px;width:400px;text-align:center;transform-origin:50% 0;">Einsatz</span>
<span class="t" style="top:80.84px;font-size:12px;line-height:12px;font-weight:bold;color:#000;-webkit-text-stroke:0.3px #000;left:529px;transform-origin:0 0;word-spacing:1.5px;">1. Schrumpfring</span>
<span class="t" style="top:80.84px;font-size:12px;line-height:12px;font-weight:bold;color:#000;-webkit-text-stroke:0.3px #000;left:654.5px;transform-origin:0 0;word-spacing:1.5px;">2. Schrumpfring</span>
<svg style="left:489.8px;top:108.6px" width="7.6" height="4.2" viewBox="0 0 7 4" preserveAspectRatio="none"><path d="M0 0h7l-3.5 4z" fill="#000"/></svg>
<span class="t" style="top:105.84px;font-size:12px;line-height:12px;font-weight:normal;color:#000;left:406px;transform-origin:0 0;transform:scaleX(0.95);">G55</span>
<svg style="left:615.3px;top:108.6px" width="7.6" height="4.2" viewBox="0 0 7 4" preserveAspectRatio="none"><path d="M0 0h7l-3.5 4z" fill="#000"/></svg>
<span class="t" style="top:105.84px;font-size:12px;line-height:12px;font-weight:normal;color:#000;left:532.5px;transform-origin:0 0;transform:scaleX(0.95);">1.2344,   53.9</span>
<svg style="left:741.0px;top:108.6px" width="7.6" height="4.2" viewBox="0 0 7 4" preserveAspectRatio="none"><path d="M0 0h7l-3.5 4z" fill="#000"/></svg>
<span class="t" style="top:105.84px;font-size:12px;line-height:12px;font-weight:normal;color:#000;left:658.6px;transform-origin:0 0;transform:scaleX(0.95);">1.2344,   49.9</span>
<span class="t" style="top:140.14px;font-size:12px;line-height:12px;font-weight:normal;color:#000;left:272px;transform-origin:0 0;transform:scaleX(0.95);">Werkstoffname</span>
<span class="t" style="top:137.87px;font-size:12.2px;line-height:12.2px;font-weight:bold;color:#000;-webkit-text-stroke:0.3px #000;left:247.60000000000002px;width:400px;text-align:center;transform-origin:50% 0;transform:scaleX(1.07);">G55</span>
<span class="t" style="top:137.87px;font-size:12.2px;line-height:12.2px;font-weight:bold;color:#000;-webkit-text-stroke:0.3px #000;left:374.6px;width:400px;text-align:center;transform-origin:50% 0;transform:scaleX(1.03);">X40CrMoV51</span>
<span class="t" style="top:137.87px;font-size:12.2px;line-height:12.2px;font-weight:bold;color:#000;-webkit-text-stroke:0.3px #000;left:500.6px;width:400px;text-align:center;transform-origin:50% 0;transform:scaleX(1.03);">X40CrMoV51</span>
<span class="t" style="top:167.34px;font-size:12px;line-height:12px;font-weight:normal;color:#000;left:272px;transform-origin:0 0;transform:scaleX(0.93);">Werkstoffnummer</span>
<span class="t" style="top:165.07px;font-size:12.2px;line-height:12.2px;font-weight:bold;color:#000;-webkit-text-stroke:0.3px #000;left:374.6px;width:400px;text-align:center;transform-origin:50% 0;transform:scaleX(1.07);">1.2344</span>
<span class="t" style="top:165.07px;font-size:12.2px;line-height:12.2px;font-weight:bold;color:#000;-webkit-text-stroke:0.3px #000;left:500.6px;width:400px;text-align:center;transform-origin:50% 0;transform:scaleX(1.07);">1.2344</span>
<span class="t" style="top:194.54px;font-size:12px;line-height:12px;font-weight:normal;color:#000;left:272px;transform-origin:0 0;transform:scaleX(0.93);">E-Modul</span>
<span class="t" style="top:194.54px;font-size:12px;line-height:12px;font-weight:normal;color:#000;right:427.5px;transform-origin:100% 0;transform:scaleX(0.93);">[MPa]</span>
<span class="t" style="top:192.27px;font-size:12.2px;line-height:12.2px;font-weight:bold;color:#000;-webkit-text-stroke:0.3px #000;right:334.2px;transform-origin:100% 0;transform:scaleX(1.07);">450000.</span>
<span class="t" style="top:192.27px;font-size:12.2px;line-height:12.2px;font-weight:bold;color:#000;-webkit-text-stroke:0.3px #000;right:208.20000000000005px;transform-origin:100% 0;transform:scaleX(1.07);">216000.</span>
<span class="t" style="top:192.27px;font-size:12.2px;line-height:12.2px;font-weight:bold;color:#000;-webkit-text-stroke:0.3px #000;right:82.20000000000005px;transform-origin:100% 0;transform:scaleX(1.07);">216000.</span>
<span class="t" style="top:221.74px;font-size:12px;line-height:12px;font-weight:normal;color:#000;left:272px;transform-origin:0 0;transform:scaleX(0.93);">Poisson'sche Zahl</span>
<span class="t" style="top:221.74px;font-size:12px;line-height:12px;font-weight:normal;color:#000;right:427.5px;transform-origin:100% 0;transform:scaleX(0.93);">[ - ]</span>
<span class="t" style="top:219.47px;font-size:12.2px;line-height:12.2px;font-weight:bold;color:#000;-webkit-text-stroke:0.3px #000;right:334.2px;transform-origin:100% 0;transform:scaleX(1.07);">0.25</span>
<span class="t" style="top:219.47px;font-size:12.2px;line-height:12.2px;font-weight:bold;color:#000;-webkit-text-stroke:0.3px #000;right:208.20000000000005px;transform-origin:100% 0;transform:scaleX(1.07);">0.28</span>
<span class="t" style="top:219.47px;font-size:12.2px;line-height:12.2px;font-weight:bold;color:#000;-webkit-text-stroke:0.3px #000;right:82.20000000000005px;transform-origin:100% 0;transform:scaleX(1.07);">0.28</span>
<span class="t" style="top:248.94px;font-size:12px;line-height:12px;font-weight:normal;color:#000;left:272px;transform-origin:0 0;transform:scaleX(0.945);">Zugfestigkeit</span>
<span class="t" style="top:248.94px;font-size:12px;line-height:12px;font-weight:normal;color:#000;right:427.5px;transform-origin:100% 0;transform:scaleX(0.93);">[MPa]</span>
<span class="t" style="top:246.67px;font-size:12.2px;line-height:12.2px;font-weight:bold;color:#000;-webkit-text-stroke:0.3px #000;right:208.20000000000005px;transform-origin:100% 0;transform:scaleX(1.07);">1900.0</span>
<span class="t" style="top:246.67px;font-size:12.2px;line-height:12.2px;font-weight:bold;color:#000;-webkit-text-stroke:0.3px #000;right:82.20000000000005px;transform-origin:100% 0;transform:scaleX(1.07);">1670.0</span>
<span class="t" style="top:276.14px;font-size:12px;line-height:12px;font-weight:normal;color:#000;left:272px;transform-origin:0 0;transform:scaleX(0.945);">Streckgrenze</span>
<span class="t" style="top:276.14px;font-size:12px;line-height:12px;font-weight:normal;color:#000;right:427.5px;transform-origin:100% 0;transform:scaleX(0.93);">[MPa]</span>
<span class="t" style="top:273.87px;font-size:12.2px;line-height:12.2px;font-weight:bold;color:#000;-webkit-text-stroke:0.3px #000;right:208.20000000000005px;transform-origin:100% 0;transform:scaleX(1.07);">1700.0</span>
<span class="t" style="top:273.87px;font-size:12.2px;line-height:12.2px;font-weight:bold;color:#000;-webkit-text-stroke:0.3px #000;right:82.20000000000005px;transform-origin:100% 0;transform:scaleX(1.07);">1470.0</span>
<span class="t" style="top:303.34px;font-size:12px;line-height:12px;font-weight:normal;color:#000;left:272px;transform-origin:0 0;transform:scaleX(0.912);">Anlasstemperatur</span>
<span class="t" style="top:303.34px;font-size:12px;line-height:12px;font-weight:normal;color:#000;right:427.5px;transform-origin:100% 0;transform:scaleX(0.93);">[°C]</span>
<span class="t" style="top:301.07px;font-size:12.2px;line-height:12.2px;font-weight:bold;color:#000;-webkit-text-stroke:0.3px #000;right:208.20000000000005px;transform-origin:100% 0;transform:scaleX(1.07);">550.</span>
<span class="t" style="top:301.07px;font-size:12.2px;line-height:12.2px;font-weight:bold;color:#000;-webkit-text-stroke:0.3px #000;right:82.20000000000005px;transform-origin:100% 0;transform:scaleX(1.07);">600.</span>
<span class="t" style="top:347.24px;font-size:12px;line-height:12px;font-weight:normal;color:#000;left:281px;transform-origin:0 0;transform:scaleX(0.94);">Vergleichsspannung</span>
<span class="t" style="top:377.84px;font-size:12px;line-height:12px;font-weight:normal;color:#000;left:282px;transform-origin:0 0;transform:scaleX(0.94);">Tangentialspannung</span>
<span class="t" style="top:347.14px;font-size:12px;line-height:12px;font-weight:normal;color:#000;left:398.5px;transform-origin:0 0;transform:scaleX(0.95);">[MPa]</span>
<span class="t" style="top:377.84px;font-size:12px;line-height:12px;font-weight:normal;color:#000;left:398.5px;transform-origin:0 0;transform:scaleX(0.95);">[MPa]</span>
<span class="t" style="top:344.67px;font-size:12.2px;line-height:12.2px;font-weight:bold;color:#0000ff;-webkit-text-stroke:0.3px #0000ff;right:333.4px;transform-origin:100% 0;transform:scaleX(1.09);">1462.7</span>
<span class="t" style="top:344.67px;font-size:12.2px;line-height:12.2px;font-weight:bold;color:#0000ff;-webkit-text-stroke:0.3px #0000ff;right:207.39999999999998px;transform-origin:100% 0;transform:scaleX(1.09);">1530.0</span>
<span class="t" style="top:344.67px;font-size:12.2px;line-height:12.2px;font-weight:bold;color:#0000ff;-webkit-text-stroke:0.3px #0000ff;right:81.39999999999998px;transform-origin:100% 0;transform:scaleX(1.09);">1323.0</span>
<span class="t" style="top:376.67px;font-size:12.2px;line-height:12.2px;font-weight:bold;color:#0000ff;-webkit-text-stroke:0.3px #0000ff;right:333.4px;transform-origin:100% 0;transform:scaleX(1.09);">0.0</span>
<span class="t" style="top:376.67px;font-size:12.2px;line-height:12.2px;font-weight:bold;color:#0000ff;-webkit-text-stroke:0.3px #0000ff;right:207.39999999999998px;transform-origin:100% 0;transform:scaleX(1.09);">571.1</span>
<span class="t" style="top:376.67px;font-size:12.2px;line-height:12.2px;font-weight:bold;color:#0000ff;-webkit-text-stroke:0.3px #0000ff;right:81.39999999999998px;transform-origin:100% 0;transform:scaleX(1.09);">899.6</span>
<span class="t" style="top:420.84px;font-size:12px;line-height:12px;font-weight:normal;color:#000;left:281px;transform-origin:0 0;transform:scaleX(0.945);">Verengung von Di = f(S1,S2)</span>
<span class="t" style="top:444.84px;font-size:12px;line-height:12px;font-weight:normal;color:#000;left:281px;transform-origin:0 0;transform:scaleX(0.94);">Aufweitung von Di = f(Pi)</span>
<span class="t" style="top:419.84px;font-size:12px;line-height:12px;font-weight:normal;color:#000;right:337px;transform-origin:100% 0;transform:scaleX(0.95);">-.057</span>
<span class="t" style="top:419.84px;font-size:12px;line-height:12px;font-weight:normal;color:#000;left:497px;transform-origin:0 0;transform:scaleX(0.85);">mm</span>
<span class="t" style="top:419.84px;font-size:12px;line-height:12px;font-weight:normal;color:#000;right:101px;transform-origin:100% 0;transform:scaleX(0.95);">0.010</span>
<span class="t" style="top:419.84px;font-size:12px;line-height:12px;font-weight:normal;color:#000;left:733px;transform-origin:0 0;transform:scaleX(0.85);">mm</span>
<span class="t" style="top:419.84px;font-size:12px;line-height:12px;font-weight:normal;color:#000;left:635px;transform-origin:0 0;transform:scaleX(0.92);white-space:pre;">von  Di</span>
<span class="t" style="top:443.84px;font-size:12px;line-height:12px;font-weight:normal;color:#000;right:337px;transform-origin:100% 0;transform:scaleX(0.95);">0.067</span>
<span class="t" style="top:443.84px;font-size:12px;line-height:12px;font-weight:normal;color:#000;left:497px;transform-origin:0 0;transform:scaleX(0.85);">mm</span>
<span class="t" style="top:443.84px;font-size:12px;line-height:12px;font-weight:normal;color:#000;right:101px;transform-origin:100% 0;transform:scaleX(0.95);">0.154</span>
<span class="t" style="top:443.84px;font-size:12px;line-height:12px;font-weight:normal;color:#000;left:733px;transform-origin:0 0;transform:scaleX(0.85);">mm</span>
<span class="t" style="top:443.84px;font-size:12px;line-height:12px;font-weight:normal;color:#000;left:635px;transform-origin:0 0;transform:scaleX(0.92);white-space:pre;">von  Da</span>
<span class="t" style="top:430.34px;font-size:12px;line-height:12px;font-weight:normal;color:#000;left:545.7px;transform-origin:0 0;transform:scaleX(0.92);">Gesamtänderung</span>
<span class="t" style="top:496.24px;font-size:12px;line-height:12px;font-weight:bold;color:#000;-webkit-text-stroke:0.3px #000;left:285.3px;transform-origin:0 0;transform:scaleX(1.02);">Zusammenbau</span>
<svg style="left:386.5px;top:474.4px" width="12" height="12" viewBox="0 0 12 12">
<circle cx="6" cy="6" r="5.5" fill="#fff"/>
<path d="M10 2 A5.5 5.5 0 0 0 2 10" fill="none" stroke="#808080" stroke-width="1"/>
<path d="M9.2 2.8 A4.5 4.5 0 0 0 2.8 9.2" fill="none" stroke="#404040" stroke-width="1"/>
<path d="M10 2 A5.5 5.5 0 0 1 2 10" fill="none" stroke="#ffffff" stroke-width="1"/>
<path d="M9.2 2.8 A4.5 4.5 0 0 1 2.8 9.2" fill="none" stroke="#d4d0c8" stroke-width="1"/>
<circle cx="6" cy="6" r="2" fill="#000"/>
</svg>
<span class="t" style="top:475.44px;font-size:12px;line-height:12px;font-weight:normal;color:#000;left:404.5px;transform-origin:0 0;transform:scaleX(0.915);">(2.Schrumpfring + 1.Schrumpfring)  &lt;--  Einsatz</span>
<svg style="left:386.5px;top:495.3px" width="12" height="12" viewBox="0 0 12 12">
<circle cx="6" cy="6" r="5.5" fill="#fff"/>
<path d="M10 2 A5.5 5.5 0 0 0 2 10" fill="none" stroke="#808080" stroke-width="1"/>
<path d="M9.2 2.8 A4.5 4.5 0 0 0 2.8 9.2" fill="none" stroke="#404040" stroke-width="1"/>
<path d="M10 2 A5.5 5.5 0 0 1 2 10" fill="none" stroke="#ffffff" stroke-width="1"/>
<path d="M9.2 2.8 A4.5 4.5 0 0 1 2.8 9.2" fill="none" stroke="#d4d0c8" stroke-width="1"/>

</svg>
<span class="t" style="top:496.34px;font-size:12px;line-height:12px;font-weight:normal;color:#000;left:404.5px;transform-origin:0 0;transform:scaleX(0.915);">(Einsatz + 1.Schrumpfring)  --&gt;  2.Schrumpfring</span>
<svg style="left:386.5px;top:515.5px" width="12" height="12" viewBox="0 0 12 12">
<circle cx="6" cy="6" r="5.5" fill="#fff"/>
<path d="M10 2 A5.5 5.5 0 0 0 2 10" fill="none" stroke="#808080" stroke-width="1"/>
<path d="M9.2 2.8 A4.5 4.5 0 0 0 2.8 9.2" fill="none" stroke="#404040" stroke-width="1"/>
<path d="M10 2 A5.5 5.5 0 0 1 2 10" fill="none" stroke="#ffffff" stroke-width="1"/>
<path d="M9.2 2.8 A4.5 4.5 0 0 1 2.8 9.2" fill="none" stroke="#d4d0c8" stroke-width="1"/>

</svg>
<span class="t" style="top:516.54px;font-size:12px;line-height:12px;font-weight:normal;color:#000;left:404.5px;transform-origin:0 0;transform:scaleX(0.915);">Ohne Zwischenbearbeitung</span>
<span class="t" style="top:555.84px;font-size:12px;line-height:12px;font-weight:normal;color:#000;left:-139.0px;width:400px;text-align:center;transform-origin:50% 0;transform:scaleX(0.947);">Neu Berechnung</span>
<span class="t" style="top:555.84px;font-size:12px;line-height:12px;font-weight:normal;color:#000;left:-10.25px;width:400px;text-align:center;transform-origin:50% 0;transform:scaleX(0.91);">Optimierung (Schrumpfmaß)</span>
<span class="t" style="top:555.84px;font-size:12px;line-height:12px;font-weight:normal;color:#000;left:147.0px;width:400px;text-align:center;transform-origin:50% 0;transform:scaleX(0.9);">Optimierung (Gesamt)</span>
<span class="t" style="top:555.84px;font-size:12px;line-height:12px;font-weight:normal;color:#000;left:302.25px;width:400px;text-align:center;transform-origin:50% 0;transform:scaleX(0.92);">Optimierung (nur S1,D2,S2)</span>
<span class="t" style="top:555.84px;font-size:12px;line-height:12px;font-weight:normal;color:#808080;left:428.5px;width:400px;text-align:center;transform-origin:50% 0;transform:scaleX(0.92);text-shadow:1px 1px 0 #fff;">Hilfe</span>
<span class="t" style="top:555.84px;font-size:12px;line-height:12px;font-weight:normal;color:#000;left:531.5px;width:400px;text-align:center;transform-origin:50% 0;transform:scaleX(0.92);">Grafik</span>
<span class="t" style="top:586.24px;font-size:12px;line-height:12px;font-weight:normal;color:#000;left:20.3px;transform-origin:0 0;transform:scaleX(0.94);">Bemerkung</span>
<span class="t" style="top:686.29px;font-size:11px;line-height:11px;font-weight:normal;color:#000;left:702.6px;transform-origin:0 0;transform:scaleX(1.053);word-spacing:1.8px;">26.08.2010  05:14</span>
<svg style="left:810px;top:687.6px" width="13" height="13" viewBox="0 0 13 13">
<g stroke="#ffffff" stroke-width="1.1"><path d="M13 0.6 L0.6 13 M13 4.6 L4.6 13 M13 8.6 L8.6 13"/></g>
<g stroke="#808080" stroke-width="1.9"><path d="M13 2.3 L2.3 13 M13 6.3 L6.3 13 M13 10.3 L10.3 13"/></g>
</svg>
</div></body></html>
